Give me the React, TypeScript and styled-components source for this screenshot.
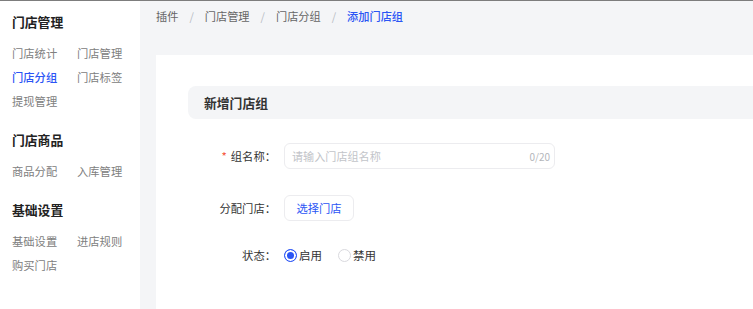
import React from "react";
import styled, { createGlobalStyle } from "styled-components";

const GlobalStyle = createGlobalStyle`
  html, body {
    margin: 0;
    padding: 0;
    background: #fff;
    overflow: hidden;
  }
  body {
    font-family: "Noto Sans CJK SC", "Noto Sans", sans-serif;
  }
`;

const menu = [
  {
    title: "门店管理",
    items: ["门店统计", "门店管理", "门店分组", "门店标签", "提现管理"],
    active: "门店分组",
  },
  { title: "门店商品", items: ["商品分配", "入库管理"], active: "" },
  { title: "基础设置", items: ["基础设置", "进店规则", "购买门店"], active: "" },
];

const crumbs = ["插件", "门店管理", "门店分组", "添加门店组"];

const App: React.FC = () => {
  return (
    <>
      <GlobalStyle />
      <Page>
        <Sidebar>
          {menu.map((group) => (
            <MenuGroup key={group.title}>
              <GroupTitle>{group.title}</GroupTitle>
              <MenuGrid>
                {group.items.map((item) => (
                  <MenuItem key={item} $active={item === group.active}>
                    {item}
                  </MenuItem>
                ))}
              </MenuGrid>
            </MenuGroup>
          ))}
        </Sidebar>
        <Main>
          <Breadcrumb>
            {crumbs.map((c, i) => (
              <React.Fragment key={c}>
                {i > 0 && <Separator>/</Separator>}
                <Crumb $current={i === crumbs.length - 1}>{c}</Crumb>
              </React.Fragment>
            ))}
          </Breadcrumb>
          <Card>
            <SectionHeader>新增门店组</SectionHeader>
            <Form>
              <FormRow>
                <Label>
                  <Required>*</Required>组名称：
                </Label>
                <InputBox>
                  <Placeholder>请输入门店组名称</Placeholder>
                  <Counter>0/20</Counter>
                </InputBox>
              </FormRow>
              <FormRow>
                <Label>分配门店：</Label>
                <PlainButton>选择门店</PlainButton>
              </FormRow>
              <FormRow $compact>
                <Label>状态：</Label>
                <RadioGroup>
                  <RadioOption>
                    <RadioDot $checked />
                    启用
                  </RadioOption>
                  <RadioOption>
                    <RadioDot />
                    禁用
                  </RadioOption>
                </RadioGroup>
              </FormRow>
            </Form>
          </Card>
        </Main>
      </Page>
    </>
  );
};

export default App;

const Page = styled.div`
  display: flex;
  width: 753px;
  height: 309px;
  border-top: 1px solid #7d7d7d;
  box-sizing: border-box;
  overflow: hidden;
`;

const Sidebar = styled.aside`
  width: 140px;
  flex-shrink: 0;
  background: #fff;
  padding: 12px 0 0 12px;
  box-sizing: border-box;
`;

const MenuGroup = styled.div`
  margin-bottom: 22px;
`;

const GroupTitle = styled.div`
  font-size: 12.8px;
  font-weight: 700;
  color: #222;
  line-height: 18px;
  margin-bottom: 14px;
`;

const MenuGrid = styled.div`
  display: grid;
  grid-template-columns: 65px 65px;
  row-gap: 8px;
`;

const MenuItem = styled.div<{ $active?: boolean }>`
  font-size: 11.3px;
  line-height: 16px;
  color: ${(p) => (p.$active ? "#2b55f5" : "#808080")};
  font-weight: ${(p) => (p.$active ? 500 : 400)};
`;

const Main = styled.main`
  flex: 1;
  background: #f4f5f7;
  padding-left: 16px;
  display: flex;
  flex-direction: column;
  min-width: 0;
`;

const Breadcrumb = styled.div`
  display: flex;
  align-items: center;
  height: 30px;
  font-size: 11.2px;
  flex-shrink: 0;
`;

const Crumb = styled.span<{ $current?: boolean }>`
  color: ${(p) => (p.$current ? "#2b55f5" : "#666")};
  font-weight: ${(p) => (p.$current ? 500 : 400)};
`;

const Separator = styled.span`
  color: #b8bcc4;
  margin: 0 11px;
`;

const Card = styled.section`
  margin-top: 24px;
  width: 700px;
  flex: 1;
  flex-shrink: 0;
  background: #fff;
  padding: 31px 0 0 32px;
  box-sizing: border-box;
`;

const SectionHeader = styled.div`
  height: 33px;
  line-height: 33px;
  background: #f4f5f7;
  border-radius: 8px 0 0 8px;
  padding-left: 16px;
  font-size: 12.8px;
  font-weight: 700;
  color: #333;
`;

const Form = styled.div`
  padding-top: 24px;
  display: flex;
  flex-direction: column;
  gap: 26px;
`;

const FormRow = styled.div<{ $compact?: boolean }>`
  display: flex;
  align-items: center;
  height: ${(p) => (p.$compact ? "16px" : "26px")};
`;

const Label = styled.div`
  width: 88px;
  padding-right: 8px;
  box-sizing: content-box;
  text-align: right;
  font-size: 11.3px;
  color: #333;
`;

const Required = styled.span`
  color: #f5543c;
  margin-right: 4px;
`;

const InputBox = styled.div`
  width: 271px;
  height: 26px;
  box-sizing: border-box;
  border: 1px solid #ececef;
  border-radius: 6px;
  display: flex;
  align-items: center;
  justify-content: space-between;
  padding: 0 4px 0 7px;
`;

const Placeholder = styled.span`
  font-size: 11.1px;
  color: #c2c4c9;
`;

const Counter = styled.span`
  font-size: 10px;
  color: #b4b6bb;
`;

const PlainButton = styled.button`
  width: 70px;
  height: 26px;
  border: 1px solid #ececef;
  border-radius: 6px;
  background: #fff;
  color: #2b55f5;
  font-family: inherit;
  font-size: 11.3px;
  padding: 0;
`;

const RadioGroup = styled.div`
  display: flex;
  align-items: center;
  gap: 16px;
`;

const RadioOption = styled.label`
  display: flex;
  align-items: center;
  gap: 2px;
  font-size: 11.5px;
  color: #333;
`;

const RadioDot = styled.span<{ $checked?: boolean }>`
  width: 13px;
  height: 13px;
  border-radius: 50%;
  box-sizing: border-box;
  border: 1px solid ${(p) => (p.$checked ? "#2b55f5" : "#d9d9de")};
  background: ${(p) => (p.$checked ? "#2b55f5" : "#fff")};
  box-shadow: ${(p) => (p.$checked ? "inset 0 0 0 2px #fff" : "none")};
`;
